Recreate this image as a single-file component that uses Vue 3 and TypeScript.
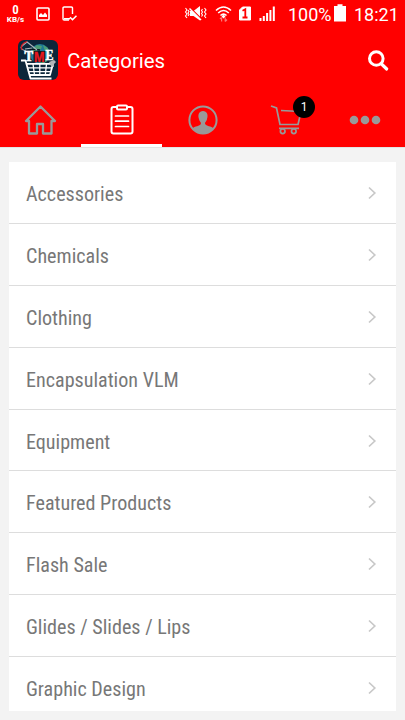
<script setup lang="ts">
const categories: string[] = [
  'Accessories',
  'Chemicals',
  'Clothing',
  'Encapsulation VLM',
  'Equipment',
  'Featured Products',
  'Flash Sale',
  'Glides / Slides / Lips',
  'Graphic Design',
]
const cartCount = 1
</script>

<template>
  <div class="screen">
    <header class="top">
      <div class="status">
        <div class="speed"><b>0</b><small>KB/s</small></div>
        <svg class="picture" width="14" height="14" viewBox="0 0 14 14">
          <rect x="1" y="1" width="12" height="12" rx="1" fill="none" stroke="#fff" stroke-width="1.600" />
          <path d="M3 10V8l2-2 2 2 2-2.500 2 2.500v2z" fill="#fff" />
        </svg>
        <svg class="device" width="15" height="16" viewBox="0 0 15 16">
          <path d="M10.500 8V2.200Q10.500 1 9.300 1H2.200Q1 1 1 2.200v10.600Q1 14 2.200 14H7" fill="none" stroke="#fff" stroke-width="1.400" />
          <path d="M2 12.800h6M8 11.200l2.500 2.500 4-4" fill="none" stroke="#fff" stroke-width="1.600" />
        </svg>
        <span class="spacer"></span>
        <svg class="indicators" width="92" height="18" viewBox="0 0 92 18">
          <g fill="none" stroke="#fff" stroke-width="1.100">
            <path d="M1.500 2l1.500 2-1.500 2 1.500 2-1.500 2 1.500 2M4 4l1 1.500L4 7l1 1.500L4 10M18.500 3l-1 1.500 1 1.500-1 1.500 1 1.500-1 1.500M20.500 2l1.500 2-1.500 2 1.500 2-1.500 2 1.500 2" />
          </g>
          <path d="M6 5h3.500l6.500-5v14.500l-6.500-4.500H6z" fill="#fff" />
          <path d="M6.500 2l10.500 10.500" stroke="#f00" stroke-width="1.200" />
          <path d="M5.500 2.500l11.500 11.500" stroke="#fff" stroke-width="1.400" />
          <g fill="none" stroke="#fff" stroke-width="1.600">
            <path d="M32 4.500q7.500-7 15 0M34.200 7q5.300-5 10.600 0M36.500 9.500q3-2.700 6 0" />
          </g>
          <path d="M39.500 8.500l2 2-2 2-2-2z" fill="#fff" />
          <path d="M37.600 15.500v-4M36 13l1.600-1.700M41.200 11.500v4M43 13.500l-1.800 2" stroke="#ff7777" stroke-width="1.200" />
          <g transform="translate(1.500 0)">
            <path d="M57 1h8v13H54V4z" fill="#fff" stroke="#fff" stroke-linejoin="round" />
            <path d="M57 4.700l2.800-1.500V11.500M57 11.500h5" fill="none" stroke="#f00" stroke-width="1.800" />
            <path d="M74 15v-3h2v3zM77.300 15v-5h2v5zM80.600 15v-8h2v8zM83.900 15v-11h2v11zM87.300 15V.5h2V15z" fill="#fff" />
          </g>
        </svg>
        <span class="percent">100%</span>
        <svg class="battery" width="12" height="18" viewBox="0 0 12 18"><path d="M0 2h3.500V.3h5V2H12v15.500H0z" fill="#fff" /></svg>
        <span class="clock">18:21</span>
      </div>

      <div class="titlebar">
        <svg class="logo" width="40" height="40" viewBox="0 0 40 40">
          <rect width="40" height="40" rx="6" fill="#0c263a" />
          <circle cx="22" cy="14" r="10" fill="#1d7896" />
          <path d="M14 9l5-4 5 1-1 3-4 2-3 3zM25 5l5 3 1 5-4-2zM18 19l6 2 6-4-1 4-4 3z" fill="#4a9d74" />
          <path d="M12 9l10 1" stroke="#07141e" stroke-width="1.500" />
          <path d="M8 11Q1 9 4 6l5-4q4 3 10 8M7 9l7-1" fill="none" stroke="#a9b4ba" stroke-width="1.200" />
          <path d="M4 10Q2 6 6 3l3-1.500" fill="none" stroke="#d51e26" stroke-width="1.300" />
          <path d="M15.500 11h11.500v11H15.500z" fill="#0b1720" />
          <g font-weight="700">
            <text x="6.500" y="21" font-family="Liberation Serif, serif" font-size="14" textLength="8.500" lengthAdjust="spacingAndGlyphs" fill="#fff" stroke="#fff" stroke-width=".7">T</text>
            <text x="16" y="22" font-family="Liberation Sans, sans-serif" font-size="15" textLength="10.500" lengthAdjust="spacingAndGlyphs" fill="#e8191f" stroke="#e8191f" stroke-width=".4">M</text>
            <text x="27.500" y="19.500" font-family="Liberation Serif, serif" font-size="14" textLength="8" lengthAdjust="spacingAndGlyphs" fill="#fff" stroke="#fff" stroke-width=".5">E</text>
          </g>
          <g fill="none" stroke="#fff" stroke-width="1.800" stroke-linejoin="round">
            <path d="M3 20.500h4.500L12.500 38.500h21M8.500 23.800H35L32 35H11.500" />
            <path d="M10 27.800h23.500M11 31.700h21.500M15 24l1.500 11M21.800 24V35M28.500 24L27.300 35" stroke-width="1.300" />
          </g>
          <path d="M31 22l5-2 2 2-2 2v3l-3-1z" fill="#b2b6b9" />
        </svg>
        <h1>Categories</h1>
        <svg class="search" width="22" height="22" viewBox="0 0 22 22">
          <circle cx="9.300" cy="8.500" r="6.800" fill="none" stroke="#fff" stroke-width="3" />
          <path d="M14.500 14l5.200 5" stroke="#fff" stroke-width="3.200" stroke-linecap="round" />
        </svg>
      </div>

      <nav class="tabs">
        <div class="tab">
          <svg class="home" width="34" height="32" viewBox="0 0 34 32" fill="none" stroke="#999" stroke-width="2.300">
            <path d="M6 17v12.500h8V20h6v9.500h8.500V17H32L17.500 2.500 3 17z" stroke-linejoin="round" />
          </svg>
        </div>
        <div class="tab active">
          <svg width="24" height="32" viewBox="0 0 24 32" fill="none" stroke="#fff" stroke-width="2">
            <path d="M7 3H3.500Q1.500 3 1.500 5v22.500q0 2 2 2h17q2 0 2-2V5q0-2-2-2H17" />
            <rect x="7" y="1.500" width="10" height="4" rx="1" />
            <path d="M5.500 12h13M5.500 17.200h13M5.500 22.500h13" stroke-width="1.700" stroke-linecap="round" />
          </svg>
        </div>
        <div class="tab">
          <svg width="30" height="30" viewBox="0 0 30 30">
            <circle cx="15" cy="15" r="13.600" fill="none" stroke="#999" stroke-width="2" />
            <path d="M15 6c-4 0-5.500 4-4 8 .5 3 2.500 3 1.800 5-1 2-5.800 2.200-8.800 4.500 5 6.300 17 6.300 22 0-3-2.300-7.800-2.500-8.800-4.500-.7-2 1.300-2 1.800-5 1.500-4 0-8-4-8z" fill="#999" />
          </svg>
        </div>
        <div class="tab">
          <div class="cart">
            <svg width="34" height="32" viewBox="0 0 34 32" fill="none" stroke="#999" stroke-width="1.700">
              <path d="M1 2l5.500 2L10 20.500h18L31 8M11 6.500l19.500 1M9 24.300h20" />
              <circle cx="12.700" cy="27.300" r="2.300" /><circle cx="23.800" cy="27.300" r="2.300" />
            </svg>
            <span class="badge">{{ cartCount }}</span>
          </div>
        </div>
        <div class="tab">
          <svg class="more" width="32" height="10" viewBox="0 0 32 10" fill="#999">
            <circle cx="5" cy="5" r="4.300" /><circle cx="16" cy="5" r="4.300" /><circle cx="27" cy="5" r="4.300" />
          </svg>
        </div>
      </nav>
    </header>

    <main class="content">
      <ul class="list">
        <li v-for="name in categories" :key="name">
          <span class="name">{{ name }}</span>
          <svg class="chevron" width="9" height="14" viewBox="0 0 9 14"><path d="M1 1.500L6.800 7 1 12.500" fill="none" stroke="#c8c8c8" stroke-width="1.700" /></svg>
        </li>
      </ul>
    </main>
  </div>
</template>

<style>
body { overflow: hidden; }
</style>

<style scoped>
.screen { width: 405px; height: 720px; display: flex; flex-direction: column; background: #f3f3f3; font-family: Roboto, sans-serif; overflow: hidden; }
.top { height: 147px; flex: none; background: #f00; color: #fff; border-bottom: 1px solid #e3e3e3; }
.status { height: 30px; display: flex; align-items: flex-start; padding: 0 7px 0 6px; box-sizing: border-box; }
.speed { width: 19px; display: flex; flex-direction: column; align-items: center; padding-top: 4px; }
.speed b { font-size: 13px; line-height: 12px; font-weight: 600; font-stretch: 75%; }
.speed small { font-size: 8px; line-height: 7px; font-weight: 700; }
.picture { margin: 7px 0 0 11px; }
.device { margin: 6px 0 0 12px; }
.spacer { flex: 1; }
.indicators { margin: 6px 12px 0 0; }
.percent { width: 44px; font-size: 18px; line-height: 29px; white-space: nowrap; }
.battery { margin: 4px 8px 0 2px; }
.clock { width: 44px; font-size: 18px; line-height: 29px; white-space: nowrap; }
.titlebar { height: 63px; display: flex; align-items: center; padding: 0 16px 3px 18px; box-sizing: border-box; }
h1 { flex: 1; margin: 0 0 0 9px; font-size: 20.400px; line-height: 24px; font-weight: 400; padding-top: 1px; }
.search { margin-top: 2px; }
.tabs { display: flex; height: 54px; }
.tab { flex: 1; display: flex; align-items: center; justify-content: center; border-bottom: 3px solid transparent; padding-top: 3px; box-sizing: border-box; }
.active { border-bottom-color: #fff; }
.home { margin-right: 1px; }
.cart { position: relative; display: flex; margin-left: 7px; }
.badge { position: absolute; left: 23px; top: -8px; width: 22px; height: 22px; border-radius: 50%; background: #000; font-size: 12px; line-height: 22px; text-align: center; }
.content { padding: 14px 9px 9px; flex: 1; min-height: 0; display: flex; flex-direction: column; }
.list { flex: 1; min-height: 0; overflow: hidden; margin: 0; padding: 0; list-style: none; background: #fff; }
li { height: 61.900px; border-bottom: 1px solid #ddd; box-sizing: border-box; display: flex; justify-content: space-between; align-items: center; padding: 0 19px 0 17px; color: #777; }
.name { font-family: "Roboto Condensed", Roboto, sans-serif; font-stretch: 75%; font-size: 20.100px; line-height: 24px; padding-top: 3px; }
.chevron { margin-top: 1px; }
</style>
